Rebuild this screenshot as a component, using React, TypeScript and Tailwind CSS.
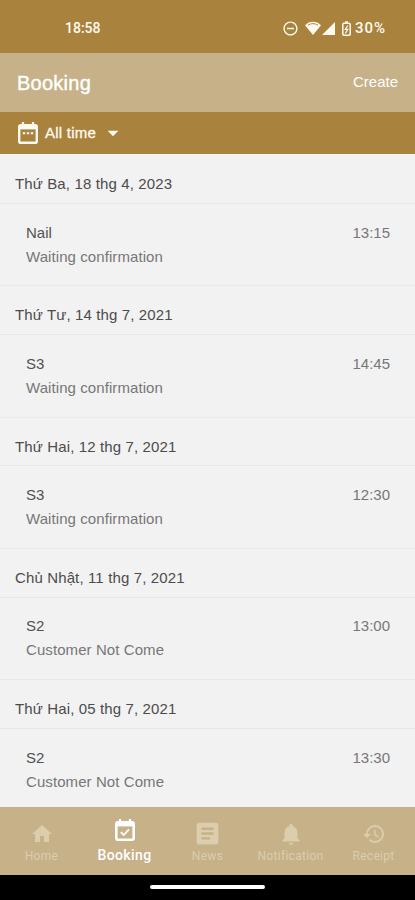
import type { ReactNode } from "react";
import {
  MdArrowDropDown,
  MdArticle,
  MdHistory,
  MdHome,
  MdNotifications,
  MdRemoveCircleOutline,
} from "react-icons/md";

type Booking = {
  date: string;
  service: string;
  status: string;
  time: string;
};

const bookings: Booking[] = [
  { date: "Thứ Ba, 18 thg 4, 2023", service: "Nail", status: "Waiting confirmation", time: "13:15" },
  { date: "Thứ Tư, 14 thg 7, 2021", service: "S3", status: "Waiting confirmation", time: "14:45" },
  { date: "Thứ Hai, 12 thg 7, 2021", service: "S3", status: "Waiting confirmation", time: "12:30" },
  { date: "Chủ Nhật, 11 thg 7, 2021", service: "S2", status: "Customer Not Come", time: "13:00" },
  { date: "Thứ Hai, 05 thg 7, 2021", service: "S2", status: "Customer Not Come", time: "13:30" },
];

function CalendarDots() {
  return (
    <svg viewBox="0 0 20 22" className="h-[22px] w-5" fill="none" stroke="currentColor">
      <rect x="1.2" y="3.2" width="17.6" height="17.6" rx="1.6" strokeWidth="2.4" />
      <path d="M1.5 5.4h17" strokeWidth="4" />
      <path d="M5 0v4M15 0v4" strokeWidth="2.2" />
      <path d="M4.8 11.2h2.4M8.8 11.2h2.4M12.8 11.2h2.4" strokeWidth="2" />
    </svg>
  );
}

function CalendarCheck() {
  return (
    <svg viewBox="0 0 20 22" className="h-[22px] w-5" fill="none" stroke="currentColor">
      <rect x="1.3" y="3.3" width="17.4" height="17.4" rx="1.6" strokeWidth="2.6" />
      <path d="M1.5 5.4h17" strokeWidth="4" />
      <path d="M5 0v4M15 0v4" strokeWidth="2.2" />
      <path d="m5.8 13.1 2.9 2.9 5.3-5.6" strokeWidth="1.8" />
    </svg>
  );
}

function StatusBar() {
  return (
    <div className="flex h-[53px] shrink-0 items-center justify-between bg-[#a9823e] pt-[3px] pr-[29px] pl-[65px] font-['Roboto',sans-serif] text-[14px] font-medium text-[#fffaf0]">
      <span>18:58</span>
      <div className="flex items-center">
        <MdRemoveCircleOutline className="h-[17px] w-[17px]" />
        <svg viewBox="0 0 16 14" className="ml-[6px] h-[14px] w-4" fill="currentColor">
          <path d="M0 4.2C4.6-.4 11.4-.4 16 4.2L8 14Z" />
          <path d="M3 4.2c3-2 7-2 10 0" fill="none" stroke="#a9823e" strokeWidth="1" />
        </svg>
        <svg viewBox="0 0 13 13" className="ml-px h-[13px] w-[13px]" fill="currentColor">
          <path d="M13 0v13H0Z" />
        </svg>
        <svg viewBox="0 0 9 15" className="ml-[7px] h-[15px] w-[9px]" fill="none" stroke="currentColor">
          <path d="M3 1h3" strokeWidth="1.5" />
          <rect x=".8" y="2.2" width="7.4" height="12" rx="1.2" strokeWidth="1.5" />
          <path d="M5.8 4.5 3.2 8.4h2.6l-2.5 4" strokeWidth="1.2" />
        </svg>
        <span className="ml-[4px] text-[15px] tracking-[1px]">30%</span>
      </div>
    </div>
  );
}

function BookingGroup({ booking }: { booking: Booking }) {
  return (
    <section className="h-[131.25px] shrink-0">
      <h2 className="flex h-[48.75px] items-center border-b border-[#e6e6e6] pt-[11px] pl-[15px] text-[15px] tracking-[0.13px] text-[#4c4c4c]">
        {booking.date}
      </h2>
      <div className="flex h-[82.5px] justify-between border-b border-[#e9e9e9] pt-[16.75px] pr-[25px] pl-[26px] text-[15px] leading-6">
        <div>
          <p className="text-[#515151]">{booking.service}</p>
          <p className="tracking-[0.08px] text-[#777777]">{booking.status}</p>
        </div>
        <span className="text-[#777777]">{booking.time}</span>
      </div>
    </section>
  );
}

function NavItem({ icon, label, active }: { icon: ReactNode; label: string; active?: boolean }) {
  return (
    <button
      type="button"
      className={`flex flex-1 flex-col items-center ${
        active ? "pt-[9px] text-[14px] font-medium text-white" : "pt-[13px] text-[12px] text-[#dccdad]"
      }`}
    >
      <span className="flex h-[27px] items-center">{icon}</span>
      <span className={active ? "leading-6 tracking-[0.4px]" : "leading-[18px] tracking-[0.3px]"}>{label}</span>
    </button>
  );
}

export default function App() {
  return (
    <div className="flex h-[900px] w-[415px] flex-col overflow-hidden bg-[#f2f2f2] font-['Liberation_Sans',Arial,sans-serif]">
      <StatusBar />
      <header className="flex h-[59px] shrink-0 items-center justify-between bg-[#c6b189] pr-[17px] pl-[17px] text-white">
        <h1 className="pt-px text-[20px] tracking-[0.25px] [-webkit-text-stroke:0.4px_white]">Booking</h1>
        <span className="pb-px text-[15px]">Create</span>
      </header>
      <div className="flex h-[42px] shrink-0 items-center bg-[#a9823e] pl-[18px] text-[#fffaf0]">
        <CalendarDots />
        <span className="ml-[7px] pt-px text-[15px] tracking-[0.25px] [-webkit-text-stroke:0.3px_#fffaf0]">
          All time
        </span>
        <MdArrowDropDown className="ml-[4px] h-[26px] w-[26px]" />
      </div>

      <main className="flex min-h-0 flex-1 flex-col overflow-hidden border-t border-[#fbf8f3]">
        {bookings.map((booking) => (
          <BookingGroup key={booking.date} booking={booking} />
        ))}
      </main>

      <nav className="grid h-[68px] shrink-0 grid-cols-5 bg-[#c6b189] font-['Roboto',sans-serif]">
        <NavItem icon={<MdHome className="h-6 w-6" />} label="Home" />
        <NavItem icon={<CalendarCheck />} label="Booking" active />
        <NavItem icon={<MdArticle className="h-[29px] w-[29px]" />} label="News" />
        <NavItem icon={<MdNotifications className="h-[26px] w-[26px]" />} label="Notification" />
        <NavItem icon={<MdHistory className="h-6 w-6" />} label="Receipt" />
      </nav>
      <div className="flex h-[25px] shrink-0 justify-center bg-black pt-[10px]">
        <div className="h-1 w-[115px] rounded-full bg-white" />
      </div>
    </div>
  );
}
